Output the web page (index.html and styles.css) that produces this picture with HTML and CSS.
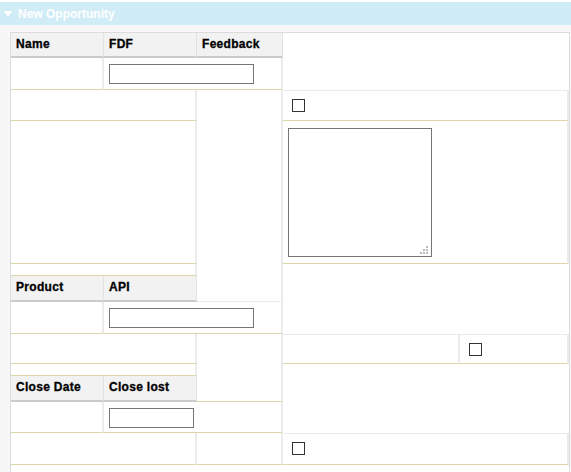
FILE: index.html
```html
<!DOCTYPE html>
<html>
<head>
<meta charset="utf-8">
<link rel="stylesheet" href="styles.css">
</head>
<body>
<div class="page">
  <div class="titlebar"><span class="tri"></span><span class="title">New Opportunity</span></div>
  <div class="panel">
    <div class="form">
      <div class="hd col-a r1">Name</div>
      <div class="hd col-b r1">FDF</div>
      <div class="hd col-c r1">Feedback</div>

      <div class="cell col-a r2"></div>
      <div class="cell col-bc r2 pad"><input class="txt" type="text"></div>

      <div class="cell col-ab r3"></div>
      <div class="cell col-c tall1 gray-bottom"></div>
      <div class="cell col-de r3 bt padcb"><input class="cb" type="checkbox"></div>

      <div class="cell col-ab r4"></div>
      <div class="cell col-de r4 padta"><textarea class="ta"></textarea></div>

      <div class="cell col-ab r5"></div>

      <div class="hd col-a r6">Product</div>
      <div class="hd col-b r6">API</div>

      <div class="cell col-a r7"></div>
      <div class="cell col-bc r7 pad"><input class="txt" type="text"></div>

      <div class="cell col-ab r8"></div>
      <div class="cell col-c tall2"></div>
      <div class="cell col-d r8 bt"></div>
      <div class="cell col-e r8 bt padcb"><input class="cb" type="checkbox"></div>

      <div class="cell col-ab r9"></div>

      <div class="hd col-a r10">Close Date</div>
      <div class="hd col-b r10">Close lost</div>

      <div class="cell col-a r11"></div>
      <div class="cell col-bc r11 pad"><input class="txt short" type="text"></div>

      <div class="cell col-ab r12"></div>
      <div class="cell col-c r12"></div>
      <div class="cell col-de r12 bt padcb"><input class="cb" type="checkbox"></div>
    </div>
  </div>
</div>
</body>
</html>
```

FILE: styles.css
```css
html, body {
  margin: 0;
  padding: 0;
  background: #ffffff;
  font-family: "Liberation Sans", Arial, sans-serif;
}

.page {
  padding-top: 2px;
  width: 571px;
  height: 470px;
  overflow: hidden;
  display: flex;
  flex-direction: column;
}

.titlebar {
  height: 23px;
  background: #d0ecf6;
  display: flex;
  align-items: center;
  flex: none;
}

.tri {
  width: 0;
  height: 0;
  border-left: 4px solid transparent;
  border-right: 4px solid transparent;
  border-top: 6px solid #ffffff;
  margin-left: 4px;
  margin-right: 6px;
  margin-top: 1px;
}

.title {
  color: #ffffff;
  font-weight: bold;
  font-size: 12px;
}

.panel {
  flex: 1;
  background: #f7f7f7;
  padding: 7px 0 0 10px;
}

.form {
  display: grid;
  width: 558px;
  grid-template-columns: 93px 93px 86px 177px 109px;
  grid-template-rows: 25px 32px 31px 143px 12px 26px 32px 30px 12px 26px 31px 32px 40px;
  background: #ffffff;
  border: 1px solid #dcdcdc;
  border-bottom: none;
}

.hd {
  background: #f1f2f1;
  border-bottom: 2px solid #cbcbcb;
  border-right: 1px solid #e2e2e2;
  font-weight: bold;
  font-size: 12px;
  letter-spacing: 0.3px;
  color: #000;
  -webkit-text-stroke: 0.3px #000;
  padding-left: 5px;
  line-height: 23px;
}

.cell {
  background: #ffffff;
  border-right: 2px solid #ebebeb;
  border-bottom: 1px solid #ddd6ab;
}

.bt { border-top: 1px solid #ebebeb; }
.gray-bottom { border-bottom: 1px solid #ebebeb; }

.pad { padding: 6px 0 0 5px; }
.padcb { padding: 8px 0 0 9px; }
.padta { padding: 7px 0 0 5px; }

.col-a { grid-column: 1; }
.col-b { grid-column: 2; }
.col-c { grid-column: 3; }
.col-d { grid-column: 4; }
.col-e { grid-column: 5; }
.col-ab { grid-column: 1 / 3; }
.col-bc { grid-column: 2 / 4; }
.col-de { grid-column: 4 / 6; }

.r1 { grid-row: 1; }
.r2 { grid-row: 2; }
.r3 { grid-row: 3; }
.r4 { grid-row: 4; }
.r5 { grid-row: 5; }
.r6 { grid-row: 6; }
.r7 { grid-row: 7; }
.r8 { grid-row: 8; }
.r9 { grid-row: 9; }
.r10 { grid-row: 10; }
.r11 { grid-row: 11; }
.r12 { grid-row: 12; }
.tall1 { grid-row: 3 / 7; }
.tall2 { grid-row: 8 / 11; }

.txt {
  display: block;
  margin: 0;
  box-sizing: border-box;
  width: 145px;
  height: 20px;
  border: 1px solid #767676;
  background: #fff;
  padding: 0 2px;
}
.txt.short { width: 85px; }

.cb {
  display: block;
  appearance: none;
  -webkit-appearance: none;
  margin: 0;
  width: 13px;
  height: 13px;
  border: 1px solid #333333;
  background: #fff;
  box-sizing: border-box;
}

.ta {
  display: block;
  margin: 0;
  box-sizing: border-box;
  width: 144px;
  height: 129px;
  border: 1px solid #767676;
  resize: none;
  background-color: #fff;
  background-image:
    linear-gradient(#bdbdbd, #bdbdbd),
    linear-gradient(#bdbdbd, #bdbdbd),
    linear-gradient(#bdbdbd, #bdbdbd),
    linear-gradient(#bdbdbd, #bdbdbd),
    linear-gradient(#bdbdbd, #bdbdbd),
    linear-gradient(#bdbdbd, #bdbdbd);
  background-size: 2px 2px;
  background-repeat: no-repeat;
  background-position:
    right 3px bottom 8px,
    right 3px bottom 5px,
    right 6px bottom 5px,
    right 3px bottom 2px,
    right 6px bottom 2px,
    right 9px bottom 2px;
}
```
